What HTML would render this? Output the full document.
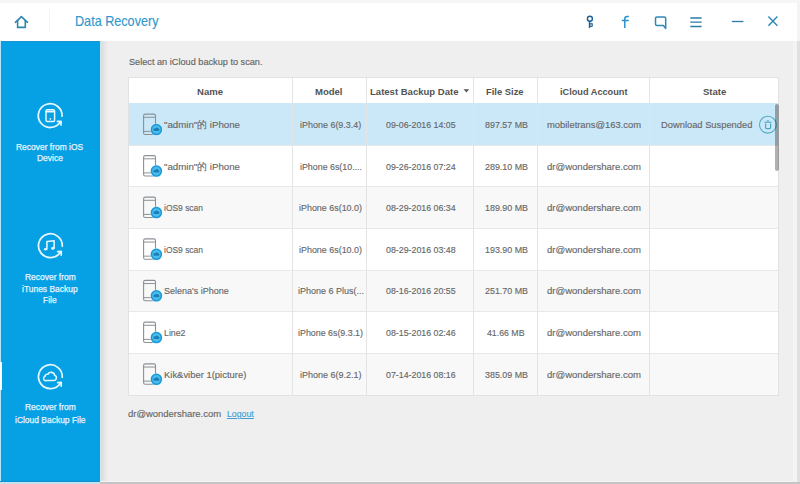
<!DOCTYPE html><html><head><meta charset="utf-8"><style>
*{margin:0;padding:0;box-sizing:border-box}
html,body{width:800px;height:484px;overflow:hidden;background:#efefef;font-family:"Liberation Sans",sans-serif}
.a{position:absolute}
.t{position:absolute;white-space:nowrap;transform-origin:0 0}
svg{position:absolute;left:0;top:0;overflow:visible}
</style></head><body>
<div class="a" style="left:0px;top:0px;width:800px;height:3px;background:#f6f6f6;"></div>
<div class="a" style="left:0px;top:3px;width:800px;height:38px;background:#ffffff;"></div>
<div class="a" style="left:49px;top:9px;width:1px;height:23px;background:#f4f4f4;"></div>
<div class="a" style="left:0px;top:41px;width:100px;height:441px;background:#06a0e5;"></div>
<div class="a" style="left:100px;top:41px;width:8px;height:441px;background:linear-gradient(to right,#d9d9d9,#efefef);"></div>
<div class="a" style="left:0px;top:41px;width:100px;height:1px;background:#1a94d2;"></div>
<div class="a" style="left:0px;top:41px;width:1px;height:441px;background:#b8e4f8;"></div>
<div class="a" style="left:100px;top:41px;width:1px;height:441px;background:#cfe6f0;"></div>
<div class="a" style="left:0px;top:362px;width:2px;height:28px;background:#ffffff;"></div>
<div class="a" style="left:128px;top:78px;width:651px;height:316.5px;background:#ffffff;"></div>
<div class="a" style="left:128px;top:103px;width:651px;height:42px;background:#cbe8f9;"></div>
<div class="a" style="left:128px;top:145px;width:651px;height:41px;background:#ffffff;"></div>
<div class="a" style="left:128px;top:186px;width:651px;height:42px;background:#f8f8f8;"></div>
<div class="a" style="left:128px;top:228px;width:651px;height:41.5px;background:#ffffff;"></div>
<div class="a" style="left:128px;top:269.5px;width:651px;height:41.5px;background:#f8f8f8;"></div>
<div class="a" style="left:128px;top:311px;width:651px;height:42px;background:#ffffff;"></div>
<div class="a" style="left:128px;top:353px;width:651px;height:41.5px;background:#f8f8f8;"></div>
<div class="a" style="left:128px;top:145px;width:651px;height:1px;background:#e8e8e8;"></div>
<div class="a" style="left:128px;top:186px;width:651px;height:1px;background:#e8e8e8;"></div>
<div class="a" style="left:128px;top:228px;width:651px;height:1px;background:#e8e8e8;"></div>
<div class="a" style="left:128px;top:269.5px;width:651px;height:1px;background:#e8e8e8;"></div>
<div class="a" style="left:128px;top:311px;width:651px;height:1px;background:#e8e8e8;"></div>
<div class="a" style="left:128px;top:353px;width:651px;height:1px;background:#e8e8e8;"></div>
<div class="a" style="left:292px;top:78px;width:1px;height:316.5px;background:#e4e4e4;"></div>
<div class="a" style="left:366px;top:78px;width:1px;height:316.5px;background:#e4e4e4;"></div>
<div class="a" style="left:473px;top:78px;width:1px;height:316.5px;background:#e4e4e4;"></div>
<div class="a" style="left:537px;top:78px;width:1px;height:316.5px;background:#e4e4e4;"></div>
<div class="a" style="left:649px;top:78px;width:1px;height:316.5px;background:#e4e4e4;"></div>
<div class="a" style="left:128px;top:77px;width:651px;height:318.5px;background:transparent;border:1px solid #e2e2e2;"></div>
<div class="a" style="left:100px;top:481px;width:700px;height:1px;background:#f4f4f4;"></div>
<div class="a" style="left:100px;top:482px;width:700px;height:2px;background:#c4c4c4;"></div>
<div class="a" style="left:0px;top:481px;width:100px;height:1px;background:#1590cf;"></div>
<div class="a" style="left:0px;top:482px;width:100px;height:2px;background:#c4e3ef;"></div>
<div class="a" style="left:793px;top:41px;width:4px;height:440px;background:#f3f3f3;"></div>
<div class="a" style="left:797px;top:41px;width:3px;height:441px;background:#e0e0e0;"></div>
<div class="a" style="left:797px;top:3px;width:3px;height:38px;background:#f4f4f4;"></div>
<div class="t" style="left:75.20px;top:12.38px;font-size:14.2px;line-height:19px;font-weight:400;color:#3198cc;transform:scaleX(0.8898);-webkit-text-stroke:0.15px #3198cc;">Data Recovery</div>
<div class="t" style="left:128.50px;top:54.85px;font-size:9.8px;line-height:13px;font-weight:400;color:#646464;transform:scaleX(0.9356);-webkit-text-stroke:0.15px #646464;">Select an iCloud backup to scan.</div>
<div class="t" style="left:15.80px;top:140.58px;font-size:9.0px;line-height:12px;font-weight:400;color:#e4f5fd;transform:scaleX(0.9394);-webkit-text-stroke:0.25px #e4f5fd;">Recover from iOS</div>
<div class="t" style="left:37.07px;top:151.78px;font-size:9.0px;line-height:12px;font-weight:400;color:#e4f5fd;transform:scaleX(0.9400);-webkit-text-stroke:0.25px #e4f5fd;">Device</div>
<div class="t" style="left:24.61px;top:271.48px;font-size:9.0px;line-height:12px;font-weight:400;color:#e4f5fd;transform:scaleX(0.9400);-webkit-text-stroke:0.25px #e4f5fd;">Recover from</div>
<div class="t" style="left:22.17px;top:282.88px;font-size:9.0px;line-height:12px;font-weight:400;color:#e4f5fd;transform:scaleX(0.9400);-webkit-text-stroke:0.25px #e4f5fd;">iTunes Backup</div>
<div class="t" style="left:43.18px;top:294.08px;font-size:9.0px;line-height:12px;font-weight:400;color:#e4f5fd;transform:scaleX(0.9400);-webkit-text-stroke:0.25px #e4f5fd;">File</div>
<div class="t" style="left:24.61px;top:401.48px;font-size:9.0px;line-height:12px;font-weight:400;color:#e4f5fd;transform:scaleX(0.9400);-webkit-text-stroke:0.25px #e4f5fd;">Recover from</div>
<div class="t" style="left:14.73px;top:413.68px;font-size:9.0px;line-height:12px;font-weight:400;color:#e4f5fd;transform:scaleX(0.9400);-webkit-text-stroke:0.25px #e4f5fd;">iCloud Backup File</div>
<div class="t" style="left:197.10px;top:84.51px;font-size:9.5px;line-height:13px;font-weight:700;color:#535353;transform:scaleX(1.0048);-webkit-text-stroke:0.0px #535353;">Name</div>
<div class="t" style="left:315.30px;top:84.51px;font-size:9.5px;line-height:13px;font-weight:700;color:#535353;transform:scaleX(1.0017);-webkit-text-stroke:0.0px #535353;">Model</div>
<div class="t" style="left:370.30px;top:84.51px;font-size:9.5px;line-height:13px;font-weight:700;color:#535353;transform:scaleX(1.0037);-webkit-text-stroke:0.0px #535353;">Latest Backup Date</div>
<div class="t" style="left:485.80px;top:84.51px;font-size:9.5px;line-height:13px;font-weight:700;color:#535353;transform:scaleX(0.9891);-webkit-text-stroke:0.0px #535353;">File Size</div>
<div class="t" style="left:559.50px;top:84.51px;font-size:9.5px;line-height:13px;font-weight:700;color:#535353;transform:scaleX(0.9664);-webkit-text-stroke:0.0px #535353;">iCloud Account</div>
<div class="t" style="left:702.70px;top:84.51px;font-size:9.5px;line-height:13px;font-weight:700;color:#535353;transform:scaleX(1.0028);-webkit-text-stroke:0.0px #535353;">State</div>
<div class="t" style="left:163.70px;top:118.17px;font-size:9.9px;line-height:13px;font-weight:400;color:#676767;transform:scaleX(0.9818);-webkit-text-stroke:0.15px #676767;">"admin"的 iPhone</div>
<div class="t" style="left:300.15px;top:118.17px;font-size:9.9px;line-height:13px;font-weight:400;color:#676767;transform:scaleX(0.9077);-webkit-text-stroke:0.15px #676767;">iPhone 6(9.3.4)</div>
<div class="t" style="left:385.70px;top:118.17px;font-size:9.9px;line-height:13px;font-weight:400;color:#676767;transform:scaleX(0.8927);-webkit-text-stroke:0.15px #676767;">09-06-2016 14:05</div>
<div class="t" style="left:484.60px;top:118.17px;font-size:9.9px;line-height:13px;font-weight:400;color:#676767;transform:scaleX(0.9002);-webkit-text-stroke:0.15px #676767;">897.57 MB</div>
<div class="t" style="left:547.20px;top:118.17px;font-size:9.9px;line-height:13px;font-weight:400;color:#676767;transform:scaleX(0.9499);-webkit-text-stroke:0.15px #676767;">mobiletrans@163.com</div>
<div class="t" style="left:660.70px;top:118.17px;font-size:9.9px;line-height:13px;font-weight:400;color:#676767;transform:scaleX(0.9458);-webkit-text-stroke:0.15px #676767;">Download Suspended</div>
<div class="t" style="left:163.70px;top:159.67px;font-size:9.9px;line-height:13px;font-weight:400;color:#676767;transform:scaleX(0.9818);-webkit-text-stroke:0.15px #676767;">"admin"的 iPhone</div>
<div class="t" style="left:299.80px;top:159.67px;font-size:9.9px;line-height:13px;font-weight:400;color:#676767;transform:scaleX(0.8963);-webkit-text-stroke:0.15px #676767;">iPhone 6s(10....</div>
<div class="t" style="left:385.70px;top:159.67px;font-size:9.9px;line-height:13px;font-weight:400;color:#676767;transform:scaleX(0.8927);-webkit-text-stroke:0.15px #676767;">09-26-2016 07:24</div>
<div class="t" style="left:484.60px;top:159.67px;font-size:9.9px;line-height:13px;font-weight:400;color:#676767;transform:scaleX(0.9002);-webkit-text-stroke:0.15px #676767;">289.10 MB</div>
<div class="t" style="left:547.20px;top:159.67px;font-size:9.9px;line-height:13px;font-weight:400;color:#676767;transform:scaleX(0.9661);-webkit-text-stroke:0.15px #676767;">dr@wondershare.com</div>
<div class="t" style="left:163.70px;top:201.17px;font-size:9.9px;line-height:13px;font-weight:400;color:#676767;transform:scaleX(0.8560);-webkit-text-stroke:0.15px #676767;">iOS9 scan</div>
<div class="t" style="left:299.30px;top:201.17px;font-size:9.9px;line-height:13px;font-weight:400;color:#676767;transform:scaleX(0.9036);-webkit-text-stroke:0.15px #676767;">iPhone 6s(10.0)</div>
<div class="t" style="left:385.70px;top:201.17px;font-size:9.9px;line-height:13px;font-weight:400;color:#676767;transform:scaleX(0.8927);-webkit-text-stroke:0.15px #676767;">08-29-2016 06:34</div>
<div class="t" style="left:484.60px;top:201.17px;font-size:9.9px;line-height:13px;font-weight:400;color:#676767;transform:scaleX(0.9002);-webkit-text-stroke:0.15px #676767;">189.90 MB</div>
<div class="t" style="left:547.20px;top:201.17px;font-size:9.9px;line-height:13px;font-weight:400;color:#676767;transform:scaleX(0.9661);-webkit-text-stroke:0.15px #676767;">dr@wondershare.com</div>
<div class="t" style="left:163.70px;top:242.92px;font-size:9.9px;line-height:13px;font-weight:400;color:#676767;transform:scaleX(0.8560);-webkit-text-stroke:0.15px #676767;">iOS9 scan</div>
<div class="t" style="left:299.30px;top:242.92px;font-size:9.9px;line-height:13px;font-weight:400;color:#676767;transform:scaleX(0.9036);-webkit-text-stroke:0.15px #676767;">iPhone 6s(10.0)</div>
<div class="t" style="left:385.70px;top:242.92px;font-size:9.9px;line-height:13px;font-weight:400;color:#676767;transform:scaleX(0.8927);-webkit-text-stroke:0.15px #676767;">08-29-2016 03:48</div>
<div class="t" style="left:484.60px;top:242.92px;font-size:9.9px;line-height:13px;font-weight:400;color:#676767;transform:scaleX(0.9002);-webkit-text-stroke:0.15px #676767;">193.90 MB</div>
<div class="t" style="left:547.20px;top:242.92px;font-size:9.9px;line-height:13px;font-weight:400;color:#676767;transform:scaleX(0.9661);-webkit-text-stroke:0.15px #676767;">dr@wondershare.com</div>
<div class="t" style="left:163.70px;top:284.42px;font-size:9.9px;line-height:13px;font-weight:400;color:#676767;transform:scaleX(0.9103);-webkit-text-stroke:0.15px #676767;">Selena's iPhone</div>
<div class="t" style="left:297.80px;top:284.42px;font-size:9.9px;line-height:13px;font-weight:400;color:#676767;transform:scaleX(0.9107);-webkit-text-stroke:0.15px #676767;">iPhone 6 Plus(...</div>
<div class="t" style="left:385.70px;top:284.42px;font-size:9.9px;line-height:13px;font-weight:400;color:#676767;transform:scaleX(0.8927);-webkit-text-stroke:0.15px #676767;">08-16-2016 20:55</div>
<div class="t" style="left:484.60px;top:284.42px;font-size:9.9px;line-height:13px;font-weight:400;color:#676767;transform:scaleX(0.9002);-webkit-text-stroke:0.15px #676767;">251.70 MB</div>
<div class="t" style="left:547.20px;top:284.42px;font-size:9.9px;line-height:13px;font-weight:400;color:#676767;transform:scaleX(0.9661);-webkit-text-stroke:0.15px #676767;">dr@wondershare.com</div>
<div class="t" style="left:163.70px;top:326.17px;font-size:9.9px;line-height:13px;font-weight:400;color:#676767;transform:scaleX(0.8895);-webkit-text-stroke:0.15px #676767;">Line2</div>
<div class="t" style="left:298.30px;top:326.17px;font-size:9.9px;line-height:13px;font-weight:400;color:#676767;transform:scaleX(0.8969);-webkit-text-stroke:0.15px #676767;">iPhone 6s(9.3.1)</div>
<div class="t" style="left:385.70px;top:326.17px;font-size:9.9px;line-height:13px;font-weight:400;color:#676767;transform:scaleX(0.8927);-webkit-text-stroke:0.15px #676767;">08-15-2016 02:46</div>
<div class="t" style="left:487.35px;top:326.17px;font-size:9.9px;line-height:13px;font-weight:400;color:#676767;transform:scaleX(0.8869);-webkit-text-stroke:0.15px #676767;">41.66 MB</div>
<div class="t" style="left:547.20px;top:326.17px;font-size:9.9px;line-height:13px;font-weight:400;color:#676767;transform:scaleX(0.9661);-webkit-text-stroke:0.15px #676767;">dr@wondershare.com</div>
<div class="t" style="left:163.70px;top:367.92px;font-size:9.9px;line-height:13px;font-weight:400;color:#676767;transform:scaleX(0.9551);-webkit-text-stroke:0.15px #676767;">Kik&amp;viber 1(picture)</div>
<div class="t" style="left:300.05px;top:367.92px;font-size:9.9px;line-height:13px;font-weight:400;color:#676767;transform:scaleX(0.9107);-webkit-text-stroke:0.15px #676767;">iPhone 6(9.2.1)</div>
<div class="t" style="left:385.70px;top:367.92px;font-size:9.9px;line-height:13px;font-weight:400;color:#676767;transform:scaleX(0.8927);-webkit-text-stroke:0.15px #676767;">07-14-2016 08:16</div>
<div class="t" style="left:484.60px;top:367.92px;font-size:9.9px;line-height:13px;font-weight:400;color:#676767;transform:scaleX(0.9002);-webkit-text-stroke:0.15px #676767;">385.09 MB</div>
<div class="t" style="left:547.20px;top:367.92px;font-size:9.9px;line-height:13px;font-weight:400;color:#676767;transform:scaleX(0.9661);-webkit-text-stroke:0.15px #676767;">dr@wondershare.com</div>
<div class="t" style="left:128.20px;top:406.97px;font-size:9.9px;line-height:13px;font-weight:400;color:#666666;transform:scaleX(0.9569);-webkit-text-stroke:0.15px #666666;">dr@wondershare.com</div>
<div class="t" style="left:227.40px;top:406.97px;font-size:9.9px;line-height:13px;font-weight:400;color:#3d9fd4;transform:scaleX(0.8869);-webkit-text-stroke:0.15px #3d9fd4;text-decoration:underline;text-underline-offset:1px;">Logout</div>
<svg width="800" height="484"><path d="M463.6,89.2 H469.2 L466.4,92.6 Z" fill="#555"/></svg>
<svg width="800" height="484" viewBox="0 0 800 484" fill="none" stroke-linecap="round" stroke-linejoin="round"><polyline points="15.4,22.3 21.4,16.6 27.5,22.3" stroke="#2f86b0" stroke-width="1.6"/><path d="M17.6,20.6 V27.4 H25.3 V20.6" stroke="#2f86b0" stroke-width="1.6"/><circle cx="589.9" cy="18.8" r="2.5" stroke="#1e5f94" stroke-width="1.4"/><path d="M589.5,21.2 V28.1" stroke="#1e5f94" stroke-width="1.4" stroke-linecap="butt"/><path d="M589.6,23.4 H592.3 V26.5 H589.6 M589.6,24.95 H592.3" stroke="#1e5f94" stroke-width="0.9" stroke-linecap="butt" stroke-linejoin="miter"/><path d="M624.8,28.1 V19 Q624.8,16.6 627.2,16.6 H628.8 M621.8,20.6 H628.8" stroke="#2b90cf" stroke-width="1.5" stroke-linecap="butt"/><path d="M657,16.9 H664.2 Q665.7,16.9 665.7,18.4 V28.4 L663.4,25.6 H657 Q655.5,25.6 655.5,24.1 V18.4 Q655.5,16.9 657,16.9 Z" stroke="#2e89b9" stroke-width="1.5"/><path d="M690.3,18 H701.6 M690.3,22.1 H701.6 M690.3,26.5 H701.6" stroke="#2b7ca6" stroke-width="1.3" stroke-linecap="butt"/><path d="M731.8,21.5 H743.4" stroke="#2b7ca6" stroke-width="1.3" stroke-linecap="butt"/><path d="M768.4,16.6 L777.4,25.7 M777.4,16.6 L768.4,25.7" stroke="#2a86b5" stroke-width="1.4" stroke-linecap="butt"/></svg>
<svg width="800" height="484" viewBox="0 0 800 484" fill="none" stroke-linecap="round" stroke-linejoin="round"><path d="M60.18,122.08 A11.9,11.9 0 1 1 62.08,116.22" stroke="#e6f7ff" stroke-width="1.75"/><path d="M57.48,121.48 L61.08,121.38 L60.98,124.98" stroke="#e6f7ff" stroke-width="1.75"/><rect x="46.0" y="109.7" width="8.6" height="11.8" rx="1.3" stroke="#e6f7ff" stroke-width="1.5"/><path d="M46.4,111.6 H54.2" stroke="#e6f7ff" stroke-width="1.75"/><circle cx="50.3" cy="118.8" r="0.85" fill="#e6f7ff" stroke="none"/><path d="M60.38,252.18 A11.9,11.9 0 1 1 62.28,246.32" stroke="#e6f7ff" stroke-width="1.75"/><path d="M57.68,251.58 L61.28,251.48 L61.18,255.08" stroke="#e6f7ff" stroke-width="1.75"/><path d="M46.9,249 V241.5 L54.1,240.7 V248.2" stroke="#e6f7ff" stroke-width="1.55"/><ellipse cx="45.5" cy="249.2" rx="1.6" ry="1.3" fill="#e6f7ff" stroke="none"/><ellipse cx="52.7" cy="248.4" rx="1.6" ry="1.3" fill="#e6f7ff" stroke="none"/><path d="M60.38,383.18 A11.9,11.9 0 1 1 62.28,377.32" stroke="#e6f7ff" stroke-width="1.75"/><path d="M57.68,382.58 L61.28,382.48 L61.18,386.08" stroke="#e6f7ff" stroke-width="1.75"/><path d="M46.6,380.5 H53.6 A2.7,2.7 0 0 0 54.7,375.3 A3.7,3.7 0 0 0 47.8,374.3 A2.2,2.2 0 0 0 45,376.4 A2.1,2.1 0 0 0 46.6,380.5 Z" stroke="#e6f7ff" stroke-width="1.55"/></svg>
<svg width="800" height="484" viewBox="0 0 800 484" fill="none" stroke-linecap="round" stroke-linejoin="round"><g transform="translate(0,0.00)"><rect x="143.6" y="114.1" width="11.9" height="20.4" rx="1.6" stroke="#8c9196" stroke-width="1.1"/><path d="M143.8,117.3 H155.3 M143.8,131.4 H155.3" stroke="#8c9196" stroke-width="1"/><circle cx="156.4" cy="129.6" r="6.3" fill="#e8f6fc" stroke="none" opacity="0.6"/><circle cx="156.4" cy="129.6" r="5.0" fill="#4cbdea" stroke="#1b98d8" stroke-width="1.5"/><path d="M154.2,130.9 H158.7 A1.1,1.1 0 0 0 158.6,128.8 A1.8,1.8 0 0 0 155.3,128.4 A1.1,1.1 0 0 0 154.2,130.9 Z" fill="#1a80ba" stroke="none"/></g><g transform="translate(0,41.50)"><rect x="143.6" y="114.1" width="11.9" height="20.4" rx="1.6" stroke="#8c9196" stroke-width="1.1"/><path d="M143.8,117.3 H155.3 M143.8,131.4 H155.3" stroke="#8c9196" stroke-width="1"/><circle cx="156.4" cy="129.6" r="6.3" fill="#e8f6fc" stroke="none" opacity="0.6"/><circle cx="156.4" cy="129.6" r="5.0" fill="#4cbdea" stroke="#1b98d8" stroke-width="1.5"/><path d="M154.2,130.9 H158.7 A1.1,1.1 0 0 0 158.6,128.8 A1.8,1.8 0 0 0 155.3,128.4 A1.1,1.1 0 0 0 154.2,130.9 Z" fill="#1a80ba" stroke="none"/></g><g transform="translate(0,83.00)"><rect x="143.6" y="114.1" width="11.9" height="20.4" rx="1.6" stroke="#8c9196" stroke-width="1.1"/><path d="M143.8,117.3 H155.3 M143.8,131.4 H155.3" stroke="#8c9196" stroke-width="1"/><circle cx="156.4" cy="129.6" r="6.3" fill="#e8f6fc" stroke="none" opacity="0.6"/><circle cx="156.4" cy="129.6" r="5.0" fill="#4cbdea" stroke="#1b98d8" stroke-width="1.5"/><path d="M154.2,130.9 H158.7 A1.1,1.1 0 0 0 158.6,128.8 A1.8,1.8 0 0 0 155.3,128.4 A1.1,1.1 0 0 0 154.2,130.9 Z" fill="#1a80ba" stroke="none"/></g><g transform="translate(0,124.75)"><rect x="143.6" y="114.1" width="11.9" height="20.4" rx="1.6" stroke="#8c9196" stroke-width="1.1"/><path d="M143.8,117.3 H155.3 M143.8,131.4 H155.3" stroke="#8c9196" stroke-width="1"/><circle cx="156.4" cy="129.6" r="6.3" fill="#e8f6fc" stroke="none" opacity="0.6"/><circle cx="156.4" cy="129.6" r="5.0" fill="#4cbdea" stroke="#1b98d8" stroke-width="1.5"/><path d="M154.2,130.9 H158.7 A1.1,1.1 0 0 0 158.6,128.8 A1.8,1.8 0 0 0 155.3,128.4 A1.1,1.1 0 0 0 154.2,130.9 Z" fill="#1a80ba" stroke="none"/></g><g transform="translate(0,166.25)"><rect x="143.6" y="114.1" width="11.9" height="20.4" rx="1.6" stroke="#8c9196" stroke-width="1.1"/><path d="M143.8,117.3 H155.3 M143.8,131.4 H155.3" stroke="#8c9196" stroke-width="1"/><circle cx="156.4" cy="129.6" r="6.3" fill="#e8f6fc" stroke="none" opacity="0.6"/><circle cx="156.4" cy="129.6" r="5.0" fill="#4cbdea" stroke="#1b98d8" stroke-width="1.5"/><path d="M154.2,130.9 H158.7 A1.1,1.1 0 0 0 158.6,128.8 A1.8,1.8 0 0 0 155.3,128.4 A1.1,1.1 0 0 0 154.2,130.9 Z" fill="#1a80ba" stroke="none"/></g><g transform="translate(0,208.00)"><rect x="143.6" y="114.1" width="11.9" height="20.4" rx="1.6" stroke="#8c9196" stroke-width="1.1"/><path d="M143.8,117.3 H155.3 M143.8,131.4 H155.3" stroke="#8c9196" stroke-width="1"/><circle cx="156.4" cy="129.6" r="6.3" fill="#e8f6fc" stroke="none" opacity="0.6"/><circle cx="156.4" cy="129.6" r="5.0" fill="#4cbdea" stroke="#1b98d8" stroke-width="1.5"/><path d="M154.2,130.9 H158.7 A1.1,1.1 0 0 0 158.6,128.8 A1.8,1.8 0 0 0 155.3,128.4 A1.1,1.1 0 0 0 154.2,130.9 Z" fill="#1a80ba" stroke="none"/></g><g transform="translate(0,249.75)"><rect x="143.6" y="114.1" width="11.9" height="20.4" rx="1.6" stroke="#8c9196" stroke-width="1.1"/><path d="M143.8,117.3 H155.3 M143.8,131.4 H155.3" stroke="#8c9196" stroke-width="1"/><circle cx="156.4" cy="129.6" r="6.3" fill="#e8f6fc" stroke="none" opacity="0.6"/><circle cx="156.4" cy="129.6" r="5.0" fill="#4cbdea" stroke="#1b98d8" stroke-width="1.5"/><path d="M154.2,130.9 H158.7 A1.1,1.1 0 0 0 158.6,128.8 A1.8,1.8 0 0 0 155.3,128.4 A1.1,1.1 0 0 0 154.2,130.9 Z" fill="#1a80ba" stroke="none"/></g><circle cx="767.9" cy="124.7" r="8.4" stroke="#52acc6" stroke-width="1.1"/><path d="M764.3,122.2 H771.5 M766.8,120.9 H769.1" stroke="#4aa6bf" stroke-width="1" stroke-linecap="butt"/><path d="M765.6,123.4 V127.6 Q765.6,128.7 766.7,128.7 H769.5 Q770.6,128.7 770.6,127.6 V123.4" stroke="#4aa6bf" stroke-width="1.2" stroke-linecap="butt"/></svg>
<div class="a" style="left:775.2px;top:104px;width:3.7px;height:66.8px;background:rgba(0,0,0,0.31);border-radius:2px;"></div>
</body></html>
